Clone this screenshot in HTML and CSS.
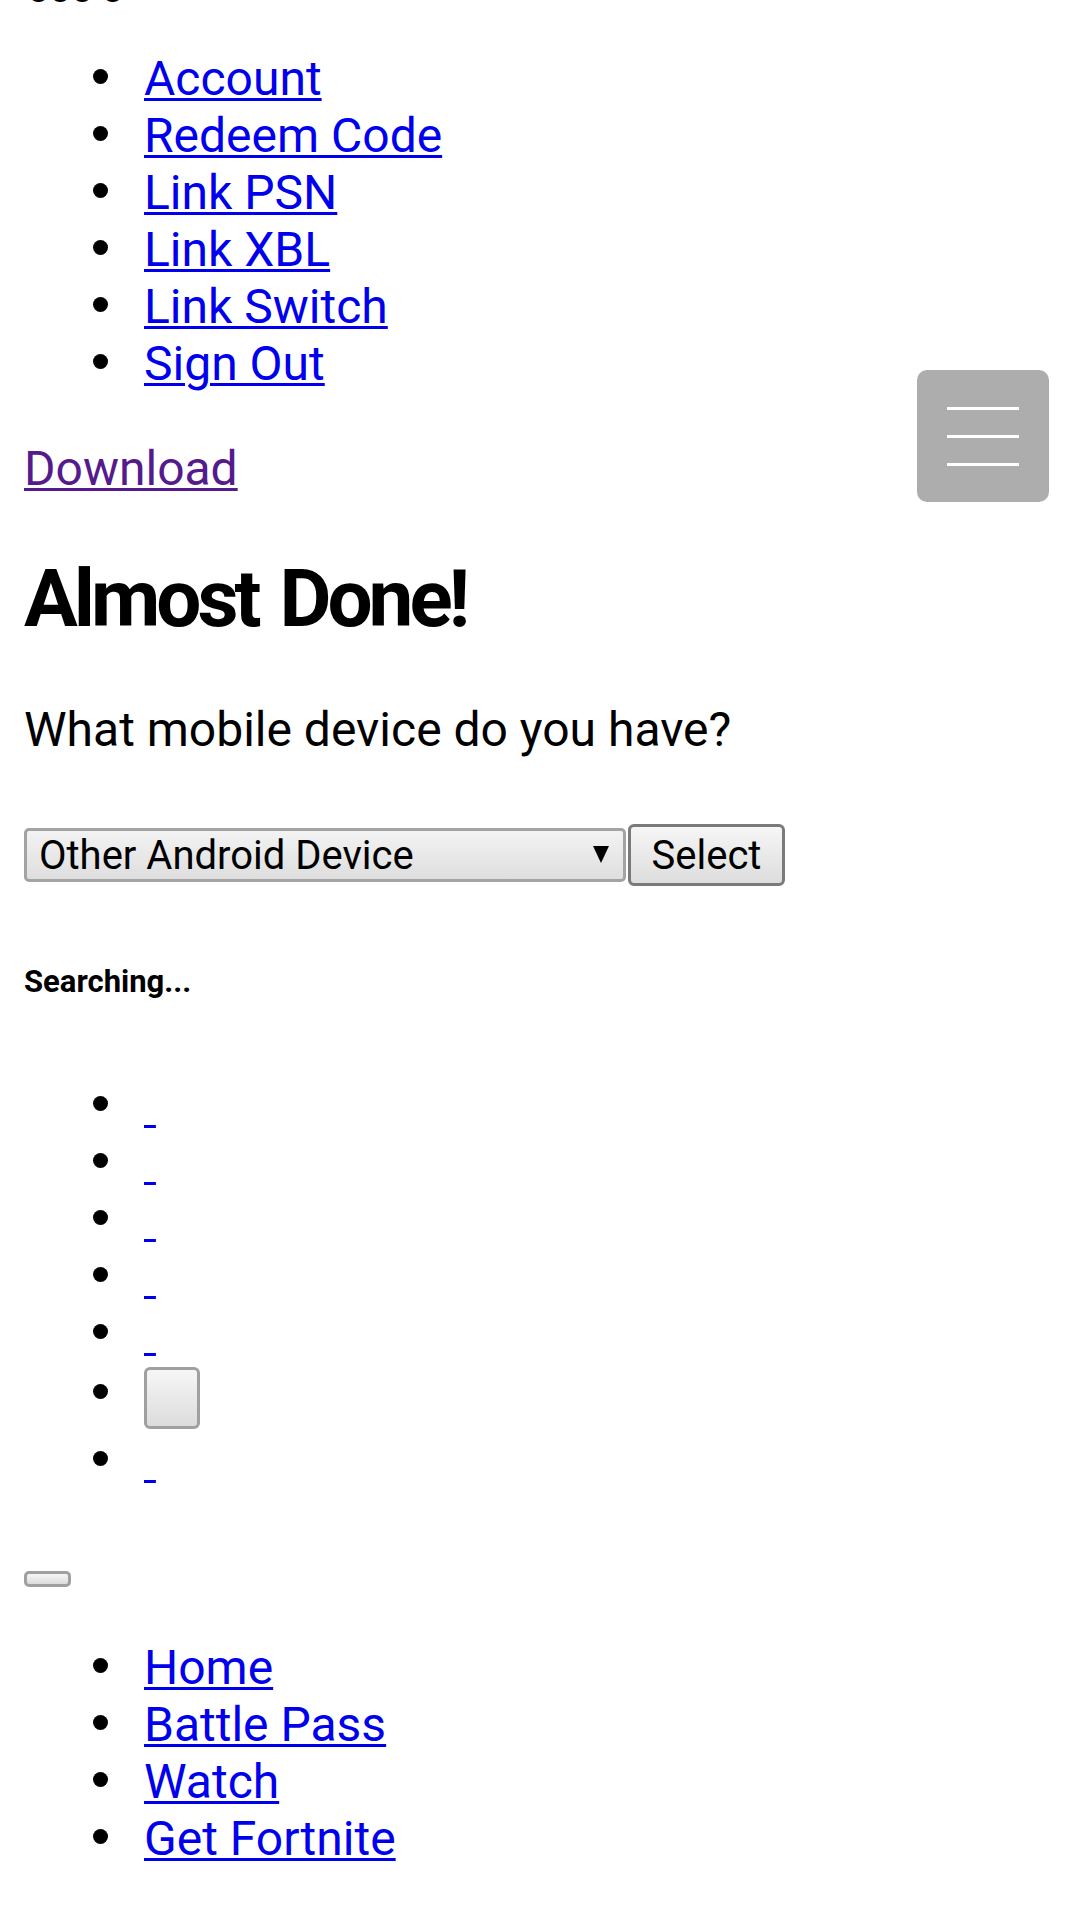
FILE: index.html
```html
<!DOCTYPE html>
<html lang="en">
<head>
<meta charset="utf-8">
<title>Almost Done!</title>
<link rel="stylesheet" href="styles.css">
</head>
<body>
<div class="topline">ooo o</div>
<ul class="list account-links">
  <li><a href="#">Account</a></li>
  <li><a href="#">Redeem Code</a></li>
  <li><a href="#">Link PSN</a></li>
  <li><a href="#">Link XBL</a></li>
  <li><a href="#">Link Switch</a></li>
  <li><a href="#">Sign Out</a></li>
</ul>
<button class="menu-toggle" type="button" aria-label="Menu">
  <span class="bar"></span><span class="bar"></span><span class="bar"></span>
</button>
<p class="download"><a class="visited" href="#">Download</a></p>
<h1 class="title">Almost Done!</h1>
<p class="question">What mobile device do you have?</p>
<form class="device-form">
  <span class="select-wrap">
    <select class="device-select">
      <option>Other Android Device</option>
    </select>
  </span>
  <button class="btn" type="button">Select</button>
</form>
<h6 class="searching">Searching...</h6>
<ul class="list empty-list">
  <li><a href="#">&nbsp;</a></li>
  <li><a href="#">&nbsp;</a></li>
  <li><a href="#">&nbsp;</a></li>
  <li><a href="#">&nbsp;</a></li>
  <li><a href="#">&nbsp;</a></li>
  <li class="has-button"><button class="btn-empty" type="button"></button></li>
  <li><a href="#">&nbsp;</a></li>
</ul>
<button class="btn-tiny" type="button"></button>
<ul class="list nav-links">
  <li><a href="#">Home</a></li>
  <li><a href="#">Battle Pass</a></li>
  <li><a href="#">Watch</a></li>
  <li><a href="#">Get Fortnite</a></li>
</ul>
</body>
</html>
```

FILE: styles.css
```css
html, body {
  background: #fff;
}
body {
  margin: 0 24px;
  font-family: Roboto, "Liberation Sans", sans-serif;
  font-size: 48px;
  color: #000;
}
a {
  color: #0000ee;
  text-decoration: underline;
  text-decoration-thickness: 3px;
  text-underline-offset: 3px;
}
a.visited {
  color: #551a8b;
}

.topline {
  font-size: 40px;
  line-height: 46px;
  height: 46px;
  margin-top: -34px;
  padding-left: 3px;
  letter-spacing: -1px;
}

.list {
  margin: 0;
  padding-left: 120px;
  line-height: normal;
  list-style: none;
}
.list li {
  position: relative;
}
.list li::before {
  content: "";
  position: absolute;
  left: -51px;
  top: 19px;
  width: 15px;
  height: 15px;
  border-radius: 50%;
  background: #000;
}
.list li.has-button::before {
  top: 22px;
}
.account-links {
  margin-top: 38px;
}

.menu-toggle {
  position: absolute;
  top: 370px;
  right: 31px;
  width: 132px;
  height: 132px;
  border: 0;
  border-radius: 10px;
  background: #adadad;
  padding: 0;
  display: flex;
  flex-direction: column;
  align-items: center;
  justify-content: center;
  gap: 25px;
}
.menu-toggle .bar {
  display: block;
  width: 72px;
  height: 3px;
  background: #fff;
}

.download {
  margin: 48px 0 0;
}

.title {
  margin: 55px 0 0;
  font-size: 80px;
  font-weight: 700;
  line-height: normal;
  letter-spacing: -4px;
  word-spacing: 6px;
}

.question {
  margin: 55px 0 0;
}

.device-form {
  margin: 66px 0 0;
  display: flex;
  align-items: center;
  gap: 2px;
}
.select-wrap {
  position: relative;
  display: block;
}
.select-wrap::after {
  content: "";
  position: absolute;
  right: 17px;
  top: 18px;
  border-left: 8px solid transparent;
  border-right: 8px solid transparent;
  border-top: 17px solid #000;
  pointer-events: none;
}
.device-select {
  appearance: none;
  -webkit-appearance: none;
  display: block;
  box-sizing: border-box;
  width: 602px;
  height: 54px;
  margin: 0;
  padding: 0 40px 0 12px;
  font-family: Roboto, "Liberation Sans", sans-serif;
  font-size: 40px;
  color: #000;
  border: 3px solid #a3a3a3;
  border-radius: 5px;
  background: linear-gradient(#f3f3f3, #dedede);
}
.btn {
  appearance: none;
  -webkit-appearance: none;
  box-sizing: border-box;
  width: 157px;
  height: 62px;
  margin: 0;
  padding: 0;
  font-family: Roboto, "Liberation Sans", sans-serif;
  font-size: 40px;
  color: #000;
  border: 3px solid #7a7a7a;
  border-radius: 6px;
  background: linear-gradient(#f6f6f6, #dddddd);
}

.searching {
  margin: 77px 0 0;
  font-size: 31px;
  font-weight: 700;
  line-height: normal;
}

.empty-list {
  margin-top: 77px;
}
.btn-empty {
  appearance: none;
  -webkit-appearance: none;
  display: inline-block;
  box-sizing: border-box;
  width: 56px;
  height: 62px;
  margin: 5px 0 3px;
  padding: 0;
  vertical-align: top;
  border: 3px solid #a0a0a0;
  border-radius: 6px;
  background: linear-gradient(#f6f6f6, #dcdcdc);
}

.btn-tiny {
  appearance: none;
  -webkit-appearance: none;
  display: block;
  box-sizing: border-box;
  width: 47px;
  height: 16px;
  margin: 82px 0 0;
  padding: 0;
  border: 3px solid #a0a0a0;
  border-radius: 5px;
  background: linear-gradient(#f6f6f6, #dcdcdc);
}

.nav-links {
  margin-top: 52px;
}
```
